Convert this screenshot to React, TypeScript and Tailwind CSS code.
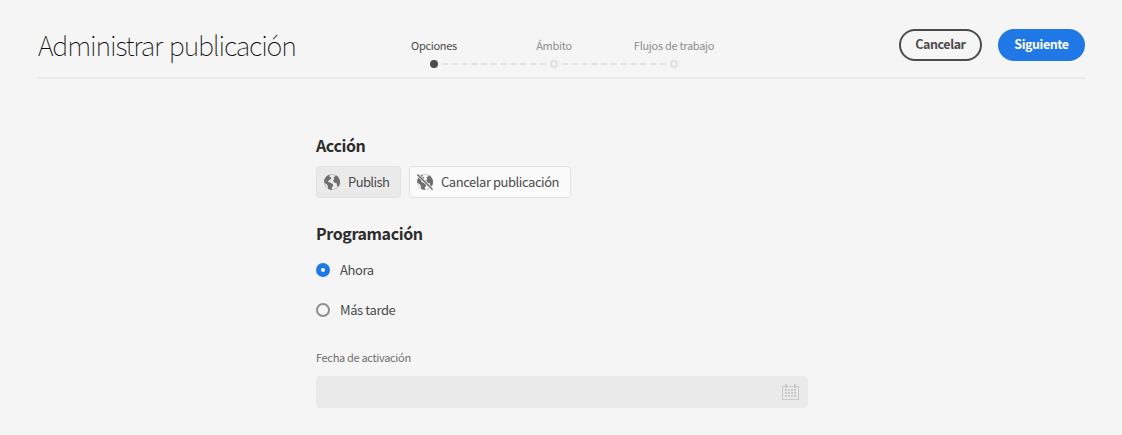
import React from "react";

const font = "font-['Noto_Sans_CJK_SC','Noto_Sans',sans-serif]";

function Globe({ off = false }: { off?: boolean }) {
  return (
    <svg viewBox="0 0 18 18" className="size-[18px] shrink-0" fill="#6e6e6e">
      <circle cx="9" cy="9" r="7.600" fill="none" stroke="#6e6e6e" strokeWidth=".7" opacity=".5" />
      <path d="M1.200 7.500C1.700 5 3.400 2.900 5.400 1.900L7.200 2.400 6 3.600 7.800 4.200 8.400 5.400 7.200 6.600 5.800 7.400 5 8.800 7 9.400 9.800 11 10.200 12.800 8.800 14.600 9 17C7.400 17 5.900 16.400 5 15.600L5 13 3.400 11 1.200 9.500Z" />
      <path d="M13 2.200C15.600 3.600 17 6.300 17 9c0 1.600-.5 3.200-1.300 4.500L13.800 13l.2-2.400L11.600 9.800 10 7.800 11.400 5.600 10.400 4.200 12 3.600Z" />
      {off && (
        <>
          <path d="M0 2 2 0 18 16 16 18Z" fill="#fbfbfb" />
          <path d="M.9 2 2 .9 17.100 16 16 17.100Z" />
        </>
      )}
    </svg>
  );
}

function CalendarIcon() {
  const cols = [4, 7, 10, 13];
  const rows = [6, 9, 12];
  return (
    <svg viewBox="0 0 18 18" className="size-[18px] shrink-0" fill="#c9c9c9" shapeRendering="crispEdges">
      <path fillRule="evenodd" d="M1 3h17v14H1zM2 4v12h15V4z" />
      <rect x="4" y="1" width="2" height="4" />
      <rect x="13" y="1" width="2" height="4" />
      {rows.map((y) => cols.map((x) => <rect key={`${x}-${y}`} x={x} y={y} width="2" height="2" />))}
    </svg>
  );
}

function Step({ label, active = false, last = false }: { label: string; active?: boolean; last?: boolean }) {
  return (
    <li className="flex w-[120px] flex-col items-center">
      <span className={`text-[11px] leading-[18px] tracking-[-0.3px] whitespace-nowrap ${active ? "text-[#4b4b4b]" : "text-[#8e8e8e]"}`}>{label}</span>
      <span className="mt-[6px] flex h-2 w-full items-center pl-[56px]">
        <span className={`size-2 shrink-0 rounded-full border-2 ${active ? "border-[#4b4b4b] bg-[#4b4b4b]" : "border-[#e1e1e1]"}`} />
        {!last && (
          <svg className="-mr-[56px] ml-1 h-[2px] w-[104px] shrink-0" viewBox="0 0 104 2">
            <path d="M0 1H104" stroke="#e1e1e1" strokeWidth="2" strokeDasharray="6 3.800" />
          </svg>
        )}
      </span>
    </li>
  );
}

export default function App() {
  return (
    <div className={`h-[435px] w-[1122px] overflow-hidden bg-[#f5f5f5] px-[37px] text-[#4b4b4b] ${font}`}>
      <header className="ml-px flex h-[79px] items-start border-b-2 border-[#eaeaea]">
        <h1 className="mt-[25px] w-[336px] text-[27px] leading-10 font-thin tracking-[-1.18px] [word-spacing:2px] whitespace-nowrap text-[#0c0c0c]">Administrar publicación</h1>
        <ol className="mt-[36px] flex w-[360px]">
          <Step label="Opciones" active />
          <Step label="Ámbito" />
          <Step label="Flujos de trabajo" last />
        </ol>
        <div className="mt-[29px] ml-auto flex gap-4">
          <button className="h-8 w-[83px] rounded-full border-2 border-[#4b4b4b] pb-[2px] text-[12.5px] leading-[26px] font-bold tracking-[-0.45px]">Cancelar</button>
          <button className="h-8 w-[87px] rounded-full bg-[#1f78e6] pb-[2px] text-[12.5px] leading-[30px] font-bold tracking-[-0.45px] text-white">Siguiente</button>
        </div>
      </header>
      <main className="ml-[279px] w-[492px] pt-[54px]">
        <h2 className="text-[16px] leading-6 font-bold tracking-[-0.4px] text-[#2c2c2c]">Acción</h2>
        <div className="mt-[9px] flex gap-2 text-[13px] tracking-[-0.45px]">
          <button className="flex h-8 w-[85px] items-center gap-[7px] rounded border border-[#e1e1e1] bg-[#eaeaea] pl-[6px]">
            <Globe />
            <span className="tracking-[-0.6px]">Publish</span>
          </button>
          <button className="flex h-8 w-[162px] items-center gap-[7px] rounded border border-[#e1e1e1] bg-[#fbfbfb] pl-[6px] whitespace-nowrap">
            <Globe off />
            <span>Cancelar publicación</span>
          </button>
        </div>
        <h2 className="mt-[23px] text-[16px] leading-6 font-bold tracking-[-0.4px] text-[#2c2c2c]">Programación</h2>
        <div className="mt-[5px] text-[13px] tracking-[-0.4px]">
          <label className="flex h-10 items-center gap-[10px]">
            <span className="size-[14px] rounded-full border-[5px] border-[#1f78e6] bg-white" />
            <span>Ahora</span>
          </label>
          <label className="flex h-10 items-center gap-[10px]">
            <span className="size-[14px] rounded-full border-2 border-[#8e8e8e]" />
            <span>Más tarde</span>
          </label>
        </div>
        <div className="mt-[18px] text-[11px] leading-[18px] tracking-[-0.32px] text-[#6e6e6e]">Fecha de activación</div>
        <div className="mt-[10px] flex h-8 items-center justify-end rounded bg-[#eaeaea] pr-[9px]">
          <CalendarIcon />
        </div>
      </main>
    </div>
  );
}
